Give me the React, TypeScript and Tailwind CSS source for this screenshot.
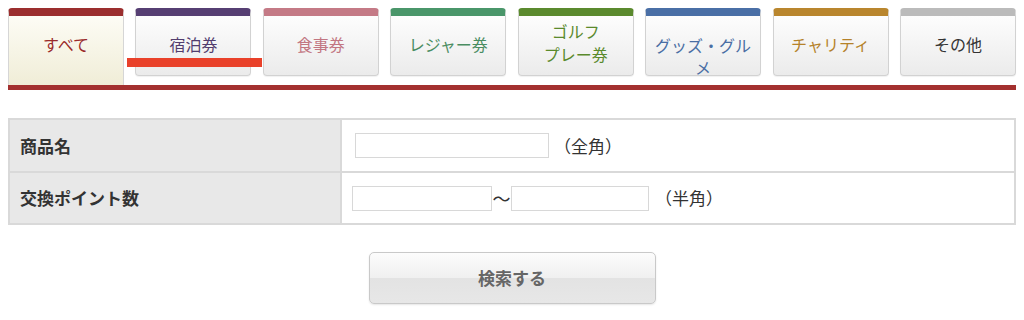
import React from "react";

type Tab = {
  label: React.ReactNode;
  top: string;
  text: string;
  pad: string;
  active?: boolean;
};

const tabs: Tab[] = [
  { label: "すべて", top: "border-t-[#9b2e2e]", text: "text-[#9a2b2b]", pad: "pt-[17px] leading-[22px]", active: true },
  { label: "宿泊券", top: "border-t-[#563f73]", text: "text-[#523d6e]", pad: "pt-[17px] leading-[22px]" },
  { label: "食事券", top: "border-t-[#c47a86]", text: "text-[#c27682]", pad: "pt-[17px] leading-[22px]" },
  { label: "レジャー券", top: "border-t-[#4a966a]", text: "text-[#4a8d62]", pad: "pt-[17px] leading-[22px]" },
  {
    label: (
      <>
        ゴルフ
        <br />
        プレー券
      </>
    ),
    top: "border-t-[#5b8a2e]",
    text: "text-[#5a8a2c]",
    pad: "pt-[4px] leading-[23px]",
  },
  {
    label: (
      <>
        グッズ・グル
        <br />
        メ
      </>
    ),
    top: "border-t-[#4a6fa6]",
    text: "text-[#4a6ea4]",
    pad: "pt-[18px] leading-[22px]",
  },
  { label: "チャリティ", top: "border-t-[#b9862e]", text: "text-[#b5822a]", pad: "pt-[17px] leading-[22px]" },
  { label: "その他", top: "border-t-[#bbbbbb]", text: "text-[#333333]", pad: "pt-[17px] leading-[22px]" },
];

export default function App() {
  return (
    <div
      className="w-[1024px] h-[320px] bg-white px-[8px] pt-[8px]"
      style={{ fontFamily: '"Noto Sans CJK JP", "Noto Sans", sans-serif' }}
    >
      {/* Tabs */}
      <div className="relative flex items-start justify-between">
        {tabs.map((t, i) =>
          t.active ? (
            <div
              key={i}
              className={`w-[116px] h-[77px] rounded-t-[4px] border-t-[8px] border-x border-x-[#d6d6d6] ${t.top} bg-[linear-gradient(to_bottom,#fdfcf5,#f0edd7)] text-center text-[16px] ${t.text} ${t.pad}`}
            >
              {t.label}
            </div>
          ) : (
            <div
              key={i}
              className={`w-[116px] h-[68px] rounded-[4px] border border-[#d2d2d2] border-t-[8px] ${t.top} bg-[linear-gradient(to_bottom,#fdfdfd,#ebebeb)] text-center text-[16px] ${t.text} ${t.pad} shadow-[0_1px_1px_rgba(0,0,0,0.06)]`}
            >
              {t.label}
            </div>
          )
        )}
        <div className="absolute left-[119px] top-[50px] w-[135px] h-[9px] bg-[#e9412a]" />
      </div>
      <div className="h-[5px] w-full bg-[#a3302f]" />

      {/* Search table */}
      <div className="mt-[28px] border-2 border-[#d9d9d9] text-[#333]">
        <div className="flex h-[51px]">
          <div className="w-[332px] bg-[#e8e8e8] border-r-2 border-[#d9d9d9] flex items-center pl-[10px] font-bold text-[17px]">
            商品名
          </div>
          <div className="flex-1 flex items-center pl-[13px]">
            <input className="w-[194px] h-[25px] border border-[#d8d8d8] bg-white outline-none" />
            <span className="ml-[5px] text-[17px]">（全角）</span>
          </div>
        </div>
        <div className="flex h-[52px] border-t-2 border-[#d9d9d9]">
          <div className="w-[332px] bg-[#e8e8e8] border-r-2 border-[#d9d9d9] flex items-center pl-[10px] font-bold text-[17px]">
            交換ポイント数
          </div>
          <div className="flex-1 flex items-center pl-[10px]">
            <input className="w-[140px] h-[25px] border border-[#d8d8d8] bg-white outline-none" />
            <span className="w-[19px] text-[18px] text-center leading-none">〜</span>
            <input className="w-[138px] h-[25px] border border-[#d8d8d8] bg-white outline-none" />
            <span className="ml-[6px] text-[17px]">（半角）</span>
          </div>
        </div>
      </div>

      {/* Button */}
      <div className="mt-[27px] flex justify-center">
        <button className="w-[287px] h-[52px] rounded-[5px] border border-[#c9c9c9] bg-[linear-gradient(to_bottom,#fcfcfc_0%,#f0f0f0_50%,#e3e3e3_51%,#e7e7e7_100%)] shadow-[0_1px_2px_rgba(0,0,0,0.1)] text-[17px] font-bold text-[#666]">
          検索する
        </button>
      </div>
    </div>
  );
}
